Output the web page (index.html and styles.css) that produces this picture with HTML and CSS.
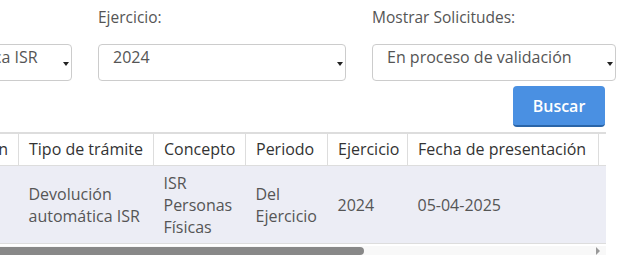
FILE: index.html
```html
<!DOCTYPE html>
<html lang="es">
<head>
<meta charset="utf-8">
<link rel="stylesheet" href="styles.css">
</head>
<body>
<div class="page">
  <div class="filters">
    <div class="field">
      <div class="label">Tipo de trámite:</div>
      <div class="select"><span class="value">Devolución automática ISR</span><span class="arrow"></span></div>
    </div>
    <div class="field">
      <div class="label">Ejercicio:</div>
      <div class="select"><span class="value">2024</span><span class="arrow"></span></div>
    </div>
    <div class="field">
      <div class="label">Mostrar Solicitudes:</div>
      <div class="select"><span class="value">En proceso de validación</span><span class="arrow"></span></div>
    </div>
  </div>
  <div class="actions">
    <button class="btn">Buscar</button>
  </div>
  <div class="table-wrap">
    <table class="grid">
      <thead>
        <tr>
          <th class="c1">Número de operación</th>
          <th class="c2">Tipo de trámite</th>
          <th class="c3">Concepto</th>
          <th class="c4">Periodo</th>
          <th class="c5">Ejercicio</th>
          <th class="c6">Fecha de presentación</th>
          <th class="c7">Estado</th>
        </tr>
      </thead>
      <tbody>
        <tr>
          <td></td>
          <td>Devolución automática ISR</td>
          <td>ISR Personas Físicas</td>
          <td>Del Ejercicio</td>
          <td>2024</td>
          <td>05-04-2025</td>
          <td></td>
        </tr>
      </tbody>
    </table>
  </div>
  <div class="scrollbar">
    <div class="thumb"></div>
    <div class="sb-arrow"></div>
  </div>
</div>
</body>
</html>
```

FILE: styles.css
```css
html, body {
  margin: 0;
  padding: 0;
  background: #ffffff;
}
body {
  font-family: "Open Sans", "Noto Sans", sans-serif;
  font-size: 16px;
  color: #555;
  width: 635px;
  height: 255px;
  overflow: hidden;
}
.page {
  padding-top: 6px;
}
.filters {
  display: grid;
  grid-template-columns: 248px 248px 244px;
  column-gap: 26px;
  margin-left: -176px;
}
.label {
  font-size: 15.5px;
  line-height: 22px;
  color: #555;
  margin-bottom: 16px;
  white-space: nowrap;
}
.select {
  height: 37px;
  box-sizing: border-box;
  border: 1px solid #ccc;
  border-radius: 4px;
  padding: 1px 14px 0 14px;
  line-height: 22px;
  color: #555;
  display: flex;
  justify-content: space-between;
  align-items: flex-start;
  white-space: nowrap;
  overflow: hidden;
}
.select .value {
  display: block;
  flex: none;
}
.arrow {
  flex: none;
  width: 0;
  height: 0;
  border-left: 3px solid transparent;
  border-right: 3px solid transparent;
  border-top: 4px solid #222;
  align-self: center;
  margin-right: -12px;
  margin-top: 2px;
}
.actions {
  display: flex;
  justify-content: flex-end;
  padding-right: 30px;
  margin-top: 5px;
}
.btn {
  width: 92px;
  height: 41px;
  box-sizing: border-box;
  background: #4a90e2;
  border: 0;
  border-bottom: 2px solid #2a65a8;
  border-radius: 4px;
  color: #fff;
  font-family: "Open Sans", "Noto Sans", sans-serif;
  font-size: 16px;
  font-weight: 600;
  padding: 0;
}
.table-wrap {
  width: 606px;
  overflow: hidden;
  margin-top: 5px;
}
.grid {
  border-collapse: collapse;
  table-layout: fixed;
  width: 930px;
  margin-left: -182px;
}
.grid th {
  font-weight: 400;
  color: #333;
  text-align: left;
  white-space: nowrap;
  line-height: 22px;
  padding: 4px 10px 5px 10px;
  border-top: 2px solid #ddd;
  border-bottom: 1px solid #ddd;
  border-left: 1px solid #ddd;
  border-right: 1px solid #ddd;
  background: #fff;
  overflow: hidden;
}
.grid th.c1 {
  text-align: right;
}
.grid td {
  background: #ecedf5;
  color: #555;
  line-height: 22px;
  padding: 6px 10px 5px 10px;
  vertical-align: middle;
  border-bottom: 1px solid #ddd;
}
.c1 { width: 200px; }
.c2 { width: 135px; }
.c3 { width: 92px; }
.c4 { width: 82px; }
.c5 { width: 80px; }
.c6 { width: 191px; }
.c7 { width: 150px; }
.grid th, .grid td { box-sizing: border-box; }
.scrollbar {
  width: 606px;
  height: 10px;
  margin-top: 2px;
  background: #f8f8f8;
  display: flex;
  align-items: flex-start;
  justify-content: space-between;
}
.thumb {
  width: 364px;
  height: 8px;
  margin-top: 1px;
  background: #888;
  border-radius: 0 5px 5px 0;
}
.sb-arrow {
  width: 0;
  height: 0;
  border-top: 4px solid transparent;
  border-bottom: 4px solid transparent;
  border-left: 4px solid #999;
  margin-top: 1px;
  margin-right: 6px;
}
```
